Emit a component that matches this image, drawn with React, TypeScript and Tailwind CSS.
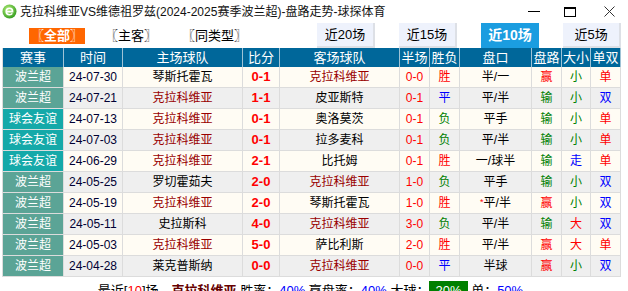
import React from 'react';

type Row = {
  league: string;
  date: string;
  home: string;
  score: string;
  away: string;
  half: string;
  result: string;
  line: string;
  pan: string;
  ou: string;
  oe: string;
};

const TEAM = '克拉科维亚';

const rows: Row[] = [
  { league: '波兰超', date: '24-07-30', home: '琴斯托霍瓦', score: '0-1', away: TEAM, half: '0-0', result: '胜', line: '半/一', pan: '赢', ou: '小', oe: '单' },
  { league: '波兰超', date: '24-07-21', home: TEAM, score: '1-1', away: '皮亚斯特', half: '0-1', result: '平', line: '平/半', pan: '输', ou: '小', oe: '双' },
  { league: '球会友谊', date: '24-07-13', home: TEAM, score: '0-1', away: '奥洛莫茨', half: '0-1', result: '负', line: '平手', pan: '输', ou: '小', oe: '单' },
  { league: '球会友谊', date: '24-07-03', home: TEAM, score: '0-1', away: '拉多麦科', half: '0-1', result: '负', line: '平/半', pan: '输', ou: '小', oe: '单' },
  { league: '球会友谊', date: '24-06-29', home: TEAM, score: '2-1', away: '比托姆', half: '0-1', result: '胜', line: '一/球半', pan: '输', ou: '走', oe: '单' },
  { league: '波兰超', date: '24-05-25', home: '罗切霍茹夫', score: '2-0', away: TEAM, half: '1-0', result: '负', line: '平手', pan: '输', ou: '小', oe: '双' },
  { league: '波兰超', date: '24-05-19', home: TEAM, score: '2-0', away: '琴斯托霍瓦', half: '1-0', result: '胜', line: '*平/半', pan: '赢', ou: '小', oe: '双' },
  { league: '波兰超', date: '24-05-11', home: '史拉斯科', score: '4-0', away: TEAM, half: '3-0', result: '负', line: '平/半', pan: '输', ou: '大', oe: '双' },
  { league: '波兰超', date: '24-05-03', home: TEAM, score: '5-0', away: '萨比利斯', half: '2-0', result: '胜', line: '平/半', pan: '赢', ou: '大', oe: '单' },
  { league: '波兰超', date: '24-04-28', home: '莱克普斯纳', score: '0-0', away: TEAM, half: '0-0', result: '平', line: '半球', pan: '赢', ou: '小', oe: '双' },
];

const COLS = 'grid grid-cols-[61px_59px_120px_37px_120px_30px_30px_72px_30px_29px_30px]';

const colorOf = (v: string) => {
  if (v === '胜' || v === '赢' || v === '大' || v === '单') return 'text-[#ff0000]';
  if (v === '平' || v === '走' || v === '双') return 'text-[#0000ff]';
  return 'text-[#008000]';
};

const teamClass = (name: string) => (name === TEAM ? 'text-[#990000]' : 'text-black');

const cell = 'flex items-center justify-center border-r border-b border-[#dcdcdc]';

const IeIcon = () => (
  <svg width="15" height="15" viewBox="0 0 15 15">
    <defs>
      <radialGradient id="g" cx="40%" cy="35%" r="70%">
        <stop offset="0%" stopColor="#b6f07a" />
        <stop offset="100%" stopColor="#2f9a1c" />
      </radialGradient>
    </defs>
    <circle cx="7.5" cy="7.5" r="7" fill="url(#g)" />
    <path d="M4.3 7.6h6.3c0-2-1.3-3.3-3.1-3.3-1.9 0-3.3 1.4-3.3 3.3s1.4 3.2 3.3 3.2c1.2 0 2.2-.5 2.8-1.4" fill="none" stroke="#fff" strokeWidth="1.6" />
  </svg>
);

const App: React.FC = () => {
  return (
    <div className="w-[628px] h-[291px] overflow-hidden bg-white font-['Liberation_Sans','Noto_Sans_CJK_SC',sans-serif] text-black">
      {/* title bar */}
      <div className="flex items-center h-[23px] pl-[2px]">
        <IeIcon />
        <span className="ml-[3px] text-[12px] text-[#111] whitespace-nowrap">
          克拉科维亚VS维德祖罗兹(2024-2025赛季波兰超)-盘路走势-球探体育
        </span>
        <div className="ml-auto flex items-center h-full">
          <div className="w-[12px] h-px bg-black mr-[24px]" />
          <div className="w-[12px] h-[10px] border border-black border-t-2 mr-[28px]" />
          <svg width="11" height="11" viewBox="0 0 11 11" className="mr-[13px]">
            <path d="M0.5 0.5l10 10M10.5 0.5l-10 10" stroke="#333" strokeWidth="1" />
          </svg>
        </div>
      </div>

      {/* tabs */}
      <div className="flex items-center h-[25px] text-[13px]">
        <span className="ml-[29px] w-[56px] h-[16px] bg-[#ff6600] text-white font-bold flex items-center justify-center whitespace-nowrap">
          〖全部〗
        </span>
        <span className="ml-[20px] whitespace-nowrap">〖主客〗</span>
        <span className="ml-[25px] whitespace-nowrap">〖同类型〗</span>
        <div className="ml-[70px] flex h-full gap-[24px]">
          {['近20场', '近15场', '近10场', '近5场'].map((t) => (
            <div
              key={t}
              className={
                t === '近10场'
                  ? 'w-[58px] h-full flex items-center justify-center bg-[#1b9de0] text-white font-bold text-[14px]'
                  : 'w-[58px] h-full flex items-center justify-center bg-[#eef2fc] border-r-2 border-b-2 border-[#dde0e6]'
              }
            >
              {t}
            </div>
          ))}
        </div>
      </div>

      {/* table */}
      <div className="ml-[2px] w-[619px] border-l border-[#dcdcdc]">
        <div className={`${COLS} h-[19px] bg-[#00679a] text-white text-[13px]`}>
          {['赛事', '时间', '主场球队', '比分', '客场球队', '半场', '胜负', '盘口', '盘路', '大小', '单双'].map((h) => (
            <div key={h} className="flex items-center justify-center border-r border-[#9fc3d6]">
              {h}
            </div>
          ))}
        </div>
        {rows.map((r, i) => {
          const bg = i % 2 === 0 ? 'bg-[#fffcf4]' : 'bg-[#efefef]';
          return (
            <div key={r.date} className={`${COLS} h-[21px] text-[12px] ${bg}`}>
              <div className={`${cell} text-white ${r.league === '波兰超' ? 'bg-[#5ba496]' : 'bg-[#15a9a9]'}`}>{r.league}</div>
              <div className={`${cell} text-[#000033]`}>{r.date}</div>
              <div className={`${cell} ${teamClass(r.home)}`}>{r.home}</div>
              <div className={`${cell} text-[#ff0000] font-bold text-[13px]`}>{r.score}</div>
              <div className={`${cell} ${teamClass(r.away)}`}>{r.away}</div>
              <div className={`${cell} text-[#ff0000]`}>{r.half}</div>
              <div className={`${cell} ${colorOf(r.result)}`}>{r.result}</div>
              <div className={cell}>
                {r.line.startsWith('*') ? (
                  <>
                    <span className="text-[#ff0000] text-[9px] self-start mt-[3px]">*</span>
                    {r.line.slice(1)}
                  </>
                ) : (
                  r.line
                )}
              </div>
              <div className={`${cell} ${colorOf(r.pan)}`}>{r.pan}</div>
              <div className={`${cell} ${colorOf(r.ou)}`}>{r.ou}</div>
              <div className={`${cell} ${colorOf(r.oe)}`}>{r.oe}</div>
            </div>
          );
        })}
      </div>

      {/* summary */}
      <div className="w-[621px] flex justify-center items-center mt-[4px] text-[13px] whitespace-nowrap">
        最近[<span className="text-[#ff0000]">10</span>]场，
        <span className="font-bold text-[#660000]">{TEAM}</span>
        &nbsp;胜率：<span className="text-[#0000ff]">40%</span>
        &nbsp;赢盘率：<span className="text-[#0000ff]">40%</span>
        &nbsp;大球：<span className="bg-[#008000] text-white px-[6px]">20%</span>
        &nbsp;单：<span className="text-[#0000ff]">50%</span>
      </div>
    </div>
  );
};

export default App;
